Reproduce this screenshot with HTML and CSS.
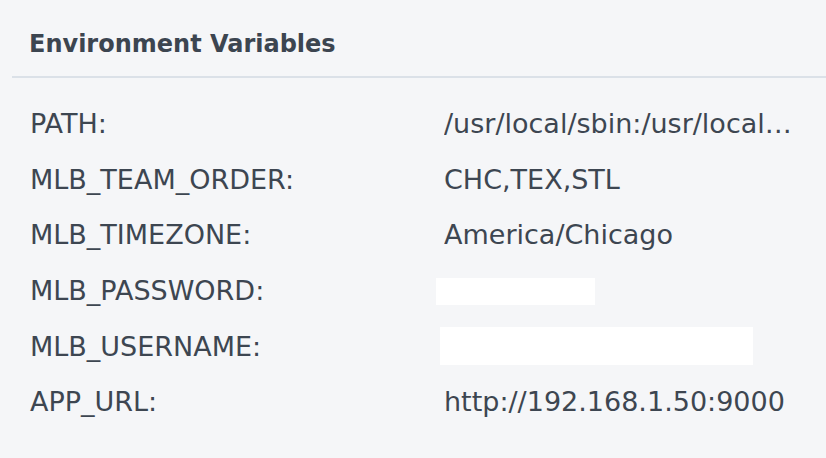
FILE: index.html
```html
<!DOCTYPE html>
<html lang="en">
<head>
<meta charset="utf-8">
<title>Environment Variables</title>
<link rel="stylesheet" href="styles.css">
</head>
<body>
<section class="panel">
  <header class="panel-head">
    <h2 class="panel-title">Environment Variables</h2>
  </header>
  <dl class="env-list">
    <div class="env-row"><dt class="env-key">PATH:</dt><dd class="env-val">/usr/local/sbin:/usr/local/bin:/usr/sbin:/usr/bin:/sbin:/bin</dd></div>
    <div class="env-row"><dt class="env-key">MLB_TEAM_ORDER:</dt><dd class="env-val">CHC,TEX,STL</dd></div>
    <div class="env-row"><dt class="env-key">MLB_TIMEZONE:</dt><dd class="env-val">America/Chicago</dd></div>
    <div class="env-row"><dt class="env-key">MLB_PASSWORD:</dt><dd class="env-val env-secret"><span class="redact redact-pass"></span></dd></div>
    <div class="env-row"><dt class="env-key">MLB_USERNAME:</dt><dd class="env-val env-secret"><span class="redact redact-user"></span></dd></div>
    <div class="env-row"><dt class="env-key">APP_URL:</dt><dd class="env-val">http://192.168.1.50:9000</dd></div>
  </dl>
</section>
</body>
</html>
```

FILE: styles.css
```css
html, body {
  margin: 0;
  padding: 0;
  background: #f5f6f8;
}

body {
  font-family: "DejaVu Sans", Verdana, sans-serif;
  color: #3d4651;
}

.panel {
  width: 826px;
  height: 458px;
  overflow: hidden;
}

.panel-head {
  margin-left: 12px;
  padding: 30px 0 0 17px;
  height: 46px;
  border-bottom: 2px solid #dbe1e8;
}

.panel-title {
  margin: 0;
  font-size: 24px;
  font-weight: bold;
  line-height: 28px;
  color: #3c4550;
}

.env-list {
  margin: 0;
  padding: 18px 0 0 30px;
}

.env-row {
  display: grid;
  grid-template-columns: 414px 352px;
  height: 55.7px;
  align-items: center;
}

.env-key,
.env-val {
  margin: 0;
  font-size: 27px;
  line-height: 55.7px;
  white-space: nowrap;
}

.env-val {
  overflow: hidden;
  text-overflow: ellipsis;
}

.env-secret {
  display: flex;
  align-items: center;
  height: 55.7px;
  overflow: visible;
}

.redact {
  display: block;
  background: #ffffff;
}

.redact-pass {
  width: 159px;
  height: 27px;
  margin-left: -8px;
  margin-top: 2px;
}

.redact-user {
  width: 313px;
  height: 38px;
  margin-left: -4px;
  margin-top: -2px;
}
```
